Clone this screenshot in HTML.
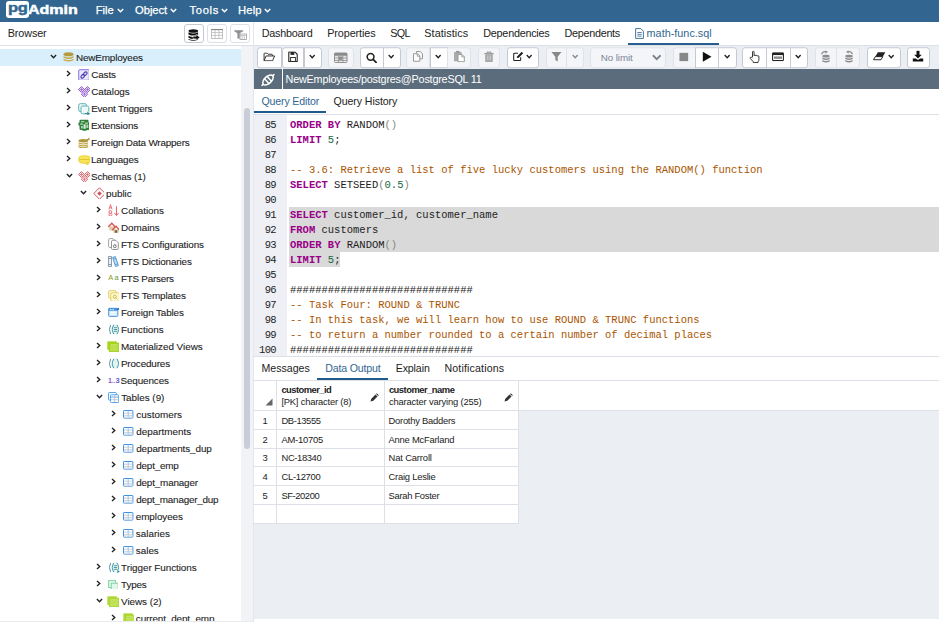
<!DOCTYPE html>
<html><head><meta charset="utf-8"><title>pgAdmin 4</title>
<style>
*{box-sizing:border-box}
html,body{margin:0;padding:0}
body{width:939px;height:622px;overflow:hidden;position:relative;background:#fff;font-family:"Liberation Sans",sans-serif;color:#222;font-size:10px}
.abs{position:absolute}
#hdr{position:absolute;left:0;top:0;width:939px;height:22px;background:#326690}
.menu{position:absolute;top:-.5px;height:20px;line-height:20px;color:#fff;font-size:11.200px;white-space:nowrap;-webkit-text-stroke:.25px #fff}
.menu svg{margin-left:3px;vertical-align:1px}
#side{position:absolute;left:0;top:22px;width:254px;height:600px;background:#fff}
.ptitle{position:absolute;left:7.700px;top:22px;height:23px;line-height:23px;font-size:10.800px;letter-spacing:-.1px}
.sb{position:absolute;top:24px;height:19px;width:19.500px;border:1px solid #dde0e6;border-radius:3px;background:#fff;display:flex;align-items:center;justify-content:center}
.hl{position:absolute;height:1px;background:#dde0e6}
.vl{position:absolute;width:1px;background:#dde0e6}
.tr{position:absolute;left:0;width:241px;height:17px}
.tr.sel{background:#d9effc}
.tr span{position:absolute}
.ar{line-height:0}
.ti{top:2.500px;line-height:0}
.tt{top:0;height:17px;line-height:17px;font-size:9.900px;white-space:nowrap;color:#1c1c1c;-webkit-text-stroke:.1px #1c1c1c}
.tab{position:absolute;top:22px;height:23px;line-height:22px;font-size:10.800px;white-space:nowrap}
.tb{position:absolute;top:47px;height:20.500px;transform:translateY(.25px);border:1px solid #c4cad3;background:#fff;display:flex;align-items:center;justify-content:center;line-height:0;padding-bottom:1.600px}
.tb.dis{border-color:#dfe3e9;background:#f4f5f8}
#conn{position:absolute;left:254px;top:69px;width:685px;height:20px;background:#5b6d7c}
.st{position:absolute;height:22px;line-height:22px;font-size:10.600px;white-space:nowrap}
#gut{position:absolute;left:254px;top:115px;width:33px;height:240.700px;background:#eef0f5}
.ln{position:absolute;left:250px;width:26px;letter-spacing:-.65px;height:15px;line-height:15px;text-align:right;font-family:"Liberation Mono",monospace;font-size:10.500px;color:#222}
.cl{position:absolute;left:290px;height:15px;line-height:15px;font-family:"Liberation Mono",monospace;font-size:10.500px;white-space:pre;color:#222}
.k{color:#908;font-weight:bold}
.c{color:#a50}
.n{color:#164}
.b{color:#887}
.selbg{position:absolute;background:#d9d9d9}
.gr{position:absolute;left:254px;width:264px}
.gr span{position:absolute;top:0;font-size:9.400px;white-space:nowrap}
.g0{left:0;width:22px;text-align:center}
.g1{left:27.500px}
.g2{left:134.500px}
.gh{position:absolute;font-size:9.400px;white-space:nowrap;line-height:12px}
</style></head>
<body>
<div id="hdr"></div>
<div class="abs" style="left:6px;top:1px;width:22.500px;height:16.700px;background:#fff;border-radius:3px;overflow:hidden"><div style="position:absolute;left:2.300px;top:0.400px;line-height:14px;font-size:12.500px;font-weight:bold;color:#326690;-webkit-text-stroke:.4px #326690;transform:scaleX(1.32);transform-origin:0 0;letter-spacing:-.2px">pg</div></div>
<div class="abs" style="left:28.100px;top:1.500px;height:16px;line-height:16px;font-size:12px;font-weight:bold;color:#fff;-webkit-text-stroke:.45px #fff;transform:scaleX(1.335);transform-origin:0 0;white-space:nowrap">Admin</div>
<div class="menu" style="left:95.7px;letter-spacing:-0.008px">File</div><div class="abs" style="left:116.5px;top:7.800px;line-height:0"><svg width="7" height="5" viewBox="0 0 7 5"><path d="M.8 .9l2.700 2.800 2.700-2.800" fill="none" stroke="#fff" stroke-width="1.500"/></svg></div>
<div class="menu" style="left:135.1px;letter-spacing:-0.057px">Object</div><div class="abs" style="left:170px;top:7.800px;line-height:0"><svg width="7" height="5" viewBox="0 0 7 5"><path d="M.8 .9l2.700 2.800 2.700-2.800" fill="none" stroke="#fff" stroke-width="1.500"/></svg></div>
<div class="menu" style="left:189.6px;letter-spacing:0.635px">Tools</div><div class="abs" style="left:220.5px;top:7.800px;line-height:0"><svg width="7" height="5" viewBox="0 0 7 5"><path d="M.8 .9l2.700 2.800 2.700-2.800" fill="none" stroke="#fff" stroke-width="1.500"/></svg></div>
<div class="menu" style="left:238.1px;letter-spacing:0.121px">Help</div><div class="abs" style="left:263.5px;top:7.800px;line-height:0"><svg width="7" height="5" viewBox="0 0 7 5"><path d="M.8 .9l2.700 2.800 2.700-2.800" fill="none" stroke="#fff" stroke-width="1.500"/></svg></div>

<div id="side"></div>
<div class="ptitle">Browser</div>
<div class="sb" style="left:184.300px;border-color:#c5cad2;padding-top:2px"><svg width="12" height="12" viewBox="0 0 12 12"><ellipse cx="5.300" cy="2" rx="4.800" ry="1.800" fill="#111"/><path d="M.5 3.300q4.800 2.400 9.600 0v2.100q-4.800 2.400-9.600 0zM.5 6.700q4.800 2.400 9.600 0v2.100q-4.800 2.400-9.600 0zM.5 10q4.800 2.200 9.600 0v.7q-4.800 2.200-9.600 0z" fill="#111"/><path d="M5 7.200h3.200V5.300l3.600 3.100-3.600 3.100V9.700H5z" fill="#111" stroke="#fff" stroke-width=".5"/></svg></div>
<div class="sb" style="left:207.200px"><svg width="12" height="10" viewBox="0 0 12 10"><rect x=".4" y=".6" width="11.200" height="8.800" fill="#fff" stroke="#b3b3b3" stroke-width=".8"/><path d="M.4 3.500h11.200M.4 6.400h11.200M4.100 .6v8.800M7.900 .6v8.800" stroke="#b3b3b3" stroke-width=".7"/><path d="M.2 .6h11.600" stroke="#7d7d7d" stroke-width="1"/></svg></div>
<div class="sb" style="left:230.100px;padding-top:2px;padding-left:1px"><svg width="13" height="10" viewBox="0 0 13 10"><path d="M.3 .3h8.800v1L5.700 3.300V8.600H3.400V3.300L.3 1.300z" fill="#8f8f8f"/><rect x="6" y="4" width="6.400" height="5.400" fill="#fff" stroke="#9c9c9c" stroke-width=".8"/><path d="M6 5.600h6.400M8.100 5.600v3.800M10.300 5.600v3.800" stroke="#b0b0b0" stroke-width=".7"/></svg></div>
<div class="hl" style="left:0;top:45px;width:254px"></div>
<div class="tr sel" style="top:49px"><span class="ar" style="left:50.0px;top:5.100px"><svg width="7" height="5" viewBox="0 0 7 5"><path d="M.9 1l2.600 2.800L6.100 1" fill="none" stroke="#222" stroke-width="1.350"/></svg></span><span class="ti" style="left:63.0px;top:3.4px"><svg width="11" height="10" viewBox="0 0 0 0 11 10"><ellipse cx="5.500" cy="2.300" rx="5" ry="2" fill="#b59a3c"/><path d="M.5 4.100q5 2.600 10 0v1.700q-5 2.600-10 0zM.5 6.700q5 2.600 10 0v1.500q-5 2.600-10 0z" fill="#c8ad50"/></svg></span><span class="tt" style="left:75.9px;letter-spacing:-0.134px">NewEmployees</span></div>
<div class="tr" style="top:66px"><span class="ar" style="left:65.9px;top:4.400px"><svg width="5" height="7" viewBox="0 0 5 7"><path d="M1 .9l2.800 2.600L1 6.100" fill="none" stroke="#222" stroke-width="1.350"/></svg></span><span class="ti" style="left:78.2px;top:3px"><svg width="11.2" height="11" viewBox="0 0 0 0 12 12"><rect x=".6" y=".6" width="10.800" height="10.800" rx="1.300" fill="#ddd7f8" stroke="#8b78dc" stroke-width=".9"/><rect x="2" y="2" width="8" height="8" rx=".8" fill="#ebe7fb"/><ellipse cx="4.700" cy="7.300" rx="2.100" ry="1.400" transform="rotate(-45 4.700 7.300)" fill="none" stroke="#4535ad" stroke-width="1.100"/><ellipse cx="7.300" cy="4.700" rx="2.100" ry="1.400" transform="rotate(-45 7.300 4.700)" fill="none" stroke="#4535ad" stroke-width="1.100"/></svg></span><span class="tt" style="left:91.2px;letter-spacing:-0.11px">Casts</span></div>
<div class="tr" style="top:83px"><span class="ar" style="left:65.9px;top:4.400px"><svg width="5" height="7" viewBox="0 0 5 7"><path d="M1 .9l2.800 2.600L1 6.100" fill="none" stroke="#222" stroke-width="1.350"/></svg></span><span class="ti" style="left:77.6px;top:2.5px"><svg width="12.2" height="11.3" viewBox="0 0 0 0 13 12"><path d="M3.500 0.500L6.500 3.500L3.500 6.500L.5 3.500z" fill="#e6d6f6" stroke="#8f5ccc" stroke-width=".9"/><path d="M9.500 0.500L12.500 3.500L9.500 6.500L6.500 3.500z" fill="#e6d6f6" stroke="#8f5ccc" stroke-width=".9"/><path d="M6.500 5L9.700 8.200L6.500 11.500L3.300 8.200z" fill="#e6d6f6" stroke="#8f5ccc" stroke-width=".9"/><path d="M3.500 1.800v3.400M1.800 3.500h3.400M9.500 1.800v3.400M7.800 3.500h3.400M6.500 6.500v3.400M4.800 8.200h3.400" stroke="#8f5ccc" stroke-width=".7"/></svg></span><span class="tt" style="left:91.2px;letter-spacing:-0.061px">Catalogs</span></div>
<div class="tr" style="top:100px"><span class="ar" style="left:65.9px;top:4.400px"><svg width="5" height="7" viewBox="0 0 5 7"><path d="M1 .9l2.800 2.600L1 6.100" fill="none" stroke="#222" stroke-width="1.350"/></svg></span><span class="ti" style="left:78.2px;top:2.8px"><svg width="12" height="12" viewBox="0 0 0 0 12.500 12.500"><rect x=".7" y=".7" width="7.800" height="7.800" rx="1.600" fill="#eef9f9" stroke="#5bb0b8" stroke-width="1"/><rect x="3" y="3" width="7.800" height="7.800" rx="1.600" fill="#eef9f9" stroke="#5bb0b8" stroke-width="1"/><rect x="8.300" y="8.600" width="4.200" height="3.900" fill="#fff"/><path d="M7 10.600h2.500" stroke="#2a8d98" stroke-width="1.100"/><path d="M9.200 8.500l3.100 2.100-3.100 2.100z" fill="#2a8d98"/></svg></span><span class="tt" style="left:91.2px;letter-spacing:-0.177px">Event Triggers</span></div>
<div class="tr" style="top:117px"><span class="ar" style="left:65.9px;top:4.400px"><svg width="5" height="7" viewBox="0 0 5 7"><path d="M1 .9l2.800 2.600L1 6.100" fill="none" stroke="#222" stroke-width="1.350"/></svg></span><span class="ti" style="left:77.9px;top:2.2px"><svg width="11.3" height="12" viewBox="0 0 0 0 12 12.500"><path d="M1.500 1.800Q1.500 .8 2.500 .8H9.500Q10.500 .8 10.500 1.800V3.200Q11.500 3.200 11.500 4.200V9.500Q11.500 11 10 11H8.500V11.800H4.500V11H3Q1.500 11 1.500 9.500V6.500H.5V3.500H1.500z" fill="#2f7d3c"/><rect x="3" y="2" width="3.300" height="1.300" fill="#a8d8ae"/><rect x="7" y="3.500" width="3" height="1.300" fill="#a8d8ae"/><rect x="2.300" y="4.300" width="2.500" height="1.600" fill="#a8d8ae"/><rect x="5.500" y="5.300" width="2.200" height="4.500" fill="#d6eed9"/><rect x="8.300" y="5.500" width="2" height="3.500" fill="#a8d8ae"/><rect x="3" y="7" width="1.800" height="2.500" fill="#a8d8ae"/></svg></span><span class="tt" style="left:90.9px;letter-spacing:-0.111px">Extensions</span></div>
<div class="tr" style="top:134px"><span class="ar" style="left:65.9px;top:4.400px"><svg width="5" height="7" viewBox="0 0 5 7"><path d="M1 .9l2.800 2.600L1 6.100" fill="none" stroke="#222" stroke-width="1.350"/></svg></span><span class="ti" style="left:78.2px;top:2.6px"><svg width="11.5" height="11.5" viewBox="0 0 0 0 12 12"><ellipse cx="5.300" cy="3.800" rx="4.800" ry="1.700" fill="#ad963a"/><path d="M.5 5.300q4.800 2.200 9.600 0v1.200q-4.800 2.200-9.600 0zM.5 7.200q4.800 2.200 9.600 0v1.200q-4.800 2.200-9.600 0zM.5 9.100q4.800 2.200 9.600 0v1.200q-4.800 2.200-9.600 0z" fill="#bfa748"/><path d="M8 3L11.500.4V3.300z" fill="#ad963a"/></svg></span><span class="tt" style="left:91.1px;letter-spacing:-0.193px">Foreign Data Wrappers</span></div>
<div class="tr" style="top:151px"><span class="ar" style="left:65.9px;top:4.400px"><svg width="5" height="7" viewBox="0 0 5 7"><path d="M1 .9l2.800 2.600L1 6.100" fill="none" stroke="#222" stroke-width="1.350"/></svg></span><span class="ti" style="left:77.7px;top:3.6px"><svg width="12.2" height="10.5" viewBox="0 0 0 0 13 11"><rect x=".6" y=".8" width="11.800" height="7.400" rx="3.600" fill="#f8e458" stroke="#ecd23a" stroke-width=".9"/><path d="M7.800 8l2 2.600.6-2.800z" fill="#f8e458" stroke="#e6c93a" stroke-width=".8"/><path d="M1.500 4.500h10" stroke="#e3c62f" stroke-width="1"/></svg></span><span class="tt" style="left:90.9px;letter-spacing:-0.131px">Languages</span></div>
<div class="tr" style="top:168px"><span class="ar" style="left:65.7px;top:5.100px"><svg width="7" height="5" viewBox="0 0 7 5"><path d="M.9 1l2.600 2.800L6.100 1" fill="none" stroke="#222" stroke-width="1.350"/></svg></span><span class="ti" style="left:77.6px;top:2.5px"><svg width="12.2" height="11.3" viewBox="0 0 0 0 13 12"><path d="M3.500 0.500L6.500 3.500L3.500 6.500L.5 3.500z" fill="#fbe6e8" stroke="#d6636c" stroke-width=".9"/><path d="M9.500 0.500L12.500 3.500L9.500 6.500L6.500 3.500z" fill="#fbe6e8" stroke="#d6636c" stroke-width=".9"/><path d="M6.500 5L9.700 8.200L6.500 11.500L3.300 8.200z" fill="#fbe6e8" stroke="#d6636c" stroke-width=".9"/><path d="M3.500 1.800v3.400M1.800 3.500h3.400M9.500 1.800v3.400M7.800 3.500h3.400M6.500 6.500v3.400M4.800 8.200h3.400" stroke="#d6636c" stroke-width=".7"/></svg></span><span class="tt" style="left:90.9px;letter-spacing:-0.099px">Schemas (1)</span></div>
<div class="tr" style="top:185px"><span class="ar" style="left:80.2px;top:5.100px"><svg width="7" height="5" viewBox="0 0 7 5"><path d="M.9 1l2.600 2.800L6.100 1" fill="none" stroke="#222" stroke-width="1.350"/></svg></span><span class="ti" style="left:93.1px;top:2.3px"><svg width="11.4" height="12" viewBox="0 0 0 0 13 13"><path d="M6.500.8L12.200 6.500L6.500 12.200L.8 6.500z" fill="#fff" stroke="#d0525c" stroke-width="1"/><path d="M6.500 4.200L8.800 6.500L6.500 8.800L4.200 6.500z" fill="#d0525c"/></svg></span><span class="tt" style="left:106.1px;letter-spacing:-0.052px">public</span></div>
<div class="tr" style="top:202px"><span class="ar" style="left:95.9px;top:4.400px"><svg width="5" height="7" viewBox="0 0 5 7"><path d="M1 .9l2.800 2.600L1 6.100" fill="none" stroke="#222" stroke-width="1.350"/></svg></span><span class="ti" style="left:107.7px;top:1.7px"><svg width="11.5" height="12" viewBox="0 0 0 0 12 12.500"><path d="M1 5.300L2.500.5L4 5.300M1.500 3.800h2" fill="none" stroke="#ea6670" stroke-width=".9"/><path d="M1.200 6.700v5.200h1.600q1.200 0 1.200-1.300T2.800 9.300H1.200M2.800 9.300q1 0 1-1.300T2.800 6.700H1.200" fill="none" stroke="#ea6670" stroke-width=".9"/><path d="M8.500 2.200v9M6.300 8.900l2.200 2.600 2.200-2.600" fill="none" stroke="#ea6670" stroke-width="1"/></svg></span><span class="tt" style="left:121.1px;letter-spacing:-0.068px">Collations</span></div>
<div class="tr" style="top:219px"><span class="ar" style="left:95.9px;top:4.400px"><svg width="5" height="7" viewBox="0 0 5 7"><path d="M1 .9l2.800 2.600L1 6.100" fill="none" stroke="#222" stroke-width="1.350"/></svg></span><span class="ti" style="left:107.8px;top:3.4px"><svg width="11.5" height="10.5" viewBox="0 0 0 0 12 11"><path d="M1.400 4.500h4.800v4H1.400z" fill="#d9c9a6"/><path d="M.3 5L3.800 1.300L7.300 5" fill="none" stroke="#d9534f" stroke-width="1.300"/><path d="M5.500 7.500h5v3.300h-5z" fill="#cdb98e"/><rect x="7.200" y="8.300" width="1.700" height="2.500" fill="#6b5533"/><path d="M4.300 8.200L8 4.300L11.700 8.200" fill="none" stroke="#d9534f" stroke-width="1.300"/></svg></span><span class="tt" style="left:120.9px;letter-spacing:-0.024px">Domains</span></div>
<div class="tr" style="top:236px"><span class="ar" style="left:95.9px;top:4.400px"><svg width="5" height="7" viewBox="0 0 5 7"><path d="M1 .9l2.800 2.600L1 6.100" fill="none" stroke="#222" stroke-width="1.350"/></svg></span><span class="ti" style="left:108.3px;top:2.2px"><svg width="11" height="12" viewBox="0 0 0 0 11 12"><path d="M.6 1.800Q.6.600 1.800.600H5L7 2.600V9.500H1.800Q.6 9.500.6 8.300z" fill="#fff" stroke="#999" stroke-width=".9"/><path d="M3.500 3.500Q3.500 2.300 4.700 2.300H7.800L10.300 4.800V10.300Q10.300 11.500 9.100 11.500H4.700Q3.500 11.500 3.500 10.300z" fill="#fff" stroke="#888" stroke-width=".9"/><circle cx="6.800" cy="8.300" r="1.400" fill="none" stroke="#666" stroke-width=".9"/><path d="M6.800 6.300v.8M8.200 6.900l-.5.500" stroke="#666" stroke-width=".7"/></svg></span><span class="tt" style="left:120.9px;letter-spacing:-0.115px">FTS Configurations</span></div>
<div class="tr" style="top:253px"><span class="ar" style="left:95.9px;top:4.400px"><svg width="5" height="7" viewBox="0 0 5 7"><path d="M1 .9l2.800 2.600L1 6.100" fill="none" stroke="#222" stroke-width="1.350"/></svg></span><span class="ti" style="left:107.9px;top:3.1px"><svg width="11" height="11" viewBox="0 0 0 0 11 11"><rect x=".6" y=".6" width="2.900" height="9.800" fill="#eef2f5" stroke="#7f94a5" stroke-width=".9"/><path d="M.6 2.500h2.900M.6 8.500h2.900" stroke="#7f94a5" stroke-width=".9"/><path d="M4.600 1.400l2.800-.8 3 9-2.800.9z" fill="#bfdcf2" stroke="#4b94cf" stroke-width=".9"/><path d="M5.200 3.200l2.800-.9M7.200 8.700l2.800-.9" stroke="#4b94cf" stroke-width=".8"/></svg></span><span class="tt" style="left:120.9px;letter-spacing:-0.137px">FTS Dictionaries</span></div>
<div class="tr" style="top:270px"><span class="ar" style="left:95.9px;top:4.400px"><svg width="5" height="7" viewBox="0 0 5 7"><path d="M1 .9l2.800 2.600L1 6.100" fill="none" stroke="#222" stroke-width="1.350"/></svg></span><span class="ti" style="left:107.8px;top:3.3px"><svg width="12" height="9" viewBox="0 0 0 0 12 9"><text x=".3" y="7.300" font-family="Liberation Sans, sans-serif" font-size="7.400" fill="#8a9a1e">A</text><text x="6.600" y="7.300" font-family="Liberation Sans, sans-serif" font-size="7.400" fill="#5c9a30">a</text></svg></span><span class="tt" style="left:120.9px;letter-spacing:-0.238px">FTS Parsers</span></div>
<div class="tr" style="top:287px"><span class="ar" style="left:95.9px;top:4.400px"><svg width="5" height="7" viewBox="0 0 5 7"><path d="M1 .9l2.800 2.600L1 6.100" fill="none" stroke="#222" stroke-width="1.350"/></svg></span><span class="ti" style="left:107.8px;top:3.3px"><svg width="11.3" height="11" viewBox="0 0 0 0 12 12"><rect x=".6" y=".6" width="7.600" height="7.600" rx="1.200" fill="#fdf8d2" stroke="#e0cd5e" stroke-width=".9"/><rect x="2.800" y="2.800" width="8.600" height="8.600" rx="1.200" fill="#fdf8d2" stroke="#e0cd5e" stroke-width=".9"/><circle cx="6.700" cy="6.700" r="1.500" fill="none" stroke="#c9ad2e" stroke-width=".8"/><path d="M7.800 7.800l1.400 1.400" stroke="#c9ad2e" stroke-width=".8"/></svg></span><span class="tt" style="left:120.9px;letter-spacing:-0.103px">FTS Templates</span></div>
<div class="tr" style="top:304px"><span class="ar" style="left:95.9px;top:4.400px"><svg width="5" height="7" viewBox="0 0 5 7"><path d="M1 .9l2.800 2.600L1 6.100" fill="none" stroke="#222" stroke-width="1.350"/></svg></span><span class="ti" style="left:107.8px;top:3.4px"><svg width="11.5" height="10" viewBox="0 0 0 0 11.500 10"><rect x=".6" y="1.300" width="9.300" height="8.100" rx="1" fill="#d3e8f9" stroke="#3f8fdc" stroke-width=".9"/><rect x=".6" y="1.300" width="9.300" height="2.400" fill="#3f8fdc"/><path d="M2 2.500h1.500M4.500 2.500h1.500" stroke="#fff" stroke-width=".8"/><path d="M2 5.300h6.500M2 7.300h6.500" stroke="#fff" stroke-width="1.100"/><path d="M8.800 2.800L11.300.2V2.800z" fill="#1f5f9f"/></svg></span><span class="tt" style="left:120.9px;letter-spacing:-0.121px">Foreign Tables</span></div>
<div class="tr" style="top:321px"><span class="ar" style="left:95.9px;top:4.400px"><svg width="5" height="7" viewBox="0 0 5 7"><path d="M1 .9l2.800 2.600L1 6.100" fill="none" stroke="#222" stroke-width="1.350"/></svg></span><span class="ti" style="left:107.5px;top:2.9px"><svg width="12" height="11.5" viewBox="0 0 0 0 12 11.500"><path d="M2.600 1Q.3 5.500 2.600 10" fill="none" stroke="#4a9aa6" stroke-width="1"/><path d="M5.300.8Q3.700 1 3.900 3.300Q4 5 2.900 5.500Q4 6 3.900 7.700Q3.700 10 5.300 10.200H8.700Q10.300 10 10.100 7.700Q10 6 11.100 5.500Q10 5 10.100 3.300Q10.300 1 8.700.8z" fill="#e2f5f5" stroke="none"/><path d="M5.900.8Q2.600 5.500 5.900 10.200" fill="none" stroke="#4a9aa6" stroke-width="1"/><path d="M8.900.8Q12.200 5.500 8.900 10.200" fill="none" stroke="#4a9aa6" stroke-width="1"/><path d="M5.800 3.700h3.300M5.800 5.500h3.300M5.800 7.300h3.300" stroke="#2f7f8b" stroke-width=".8"/></svg></span><span class="tt" style="left:120.9px;letter-spacing:0.008px">Functions</span></div>
<div class="tr" style="top:338px"><span class="ar" style="left:95.9px;top:4.400px"><svg width="5" height="7" viewBox="0 0 5 7"><path d="M1 .9l2.800 2.600L1 6.100" fill="none" stroke="#222" stroke-width="1.350"/></svg></span><span class="ti" style="left:107.4px;top:3.0px"><svg width="11.5" height="10.8" viewBox="0 0 0 0 12 11"><rect x=".3" y=".3" width="9.500" height="8.600" fill="#a9d622"/><rect x="2.200" y="2" width="9.500" height="8.700" fill="#a9d622" stroke="#9ccc1a" stroke-width=".6"/><rect x="4" y="3.800" width="6" height="5.200" fill="none" stroke="#d3ec85" stroke-width=".8"/><circle cx="7" cy="6.400" r="1.400" fill="none" stroke="#d3ec85" stroke-width=".8"/></svg></span><span class="tt" style="left:120.9px;letter-spacing:-0.02px">Materialized Views</span></div>
<div class="tr" style="top:355px"><span class="ar" style="left:95.9px;top:4.400px"><svg width="5" height="7" viewBox="0 0 5 7"><path d="M1 .9l2.800 2.600L1 6.100" fill="none" stroke="#222" stroke-width="1.350"/></svg></span><span class="ti" style="left:107.5px;top:2.9px"><svg width="12" height="11.5" viewBox="0 0 0 0 12 11.500"><path d="M2.600 1Q.3 5.500 2.600 10" fill="none" stroke="#4a9aa6" stroke-width="1"/><path d="M5.300.8Q3.700 1 3.900 3.300Q4 5 2.900 5.500Q4 6 3.900 7.700Q3.700 10 5.300 10.200H8.700Q10.300 10 10.100 7.700Q10 6 11.100 5.500Q10 5 10.100 3.300Q10.300 1 8.700.8z" fill="#e2f5f5" stroke="none"/><path d="M5.900.8Q2.600 5.500 5.900 10.200" fill="none" stroke="#4a9aa6" stroke-width="1"/><path d="M8.900.8Q12.200 5.500 8.900 10.200" fill="none" stroke="#4a9aa6" stroke-width="1"/></svg></span><span class="tt" style="left:120.9px;letter-spacing:-0.14px">Procedures</span></div>
<div class="tr" style="top:372px"><span class="ar" style="left:95.9px;top:4.400px"><svg width="5" height="7" viewBox="0 0 5 7"><path d="M1 .9l2.800 2.600L1 6.100" fill="none" stroke="#222" stroke-width="1.350"/></svg></span><span class="ti" style="left:107.6px;top:3.8px"><svg width="12" height="8" viewBox="0 0 0 0 12 8"><text x="0" y="6.800" font-family="Liberation Sans, sans-serif" font-size="7.200" font-weight="bold" fill="#9259cf" textLength="4" lengthAdjust="spacingAndGlyphs">1</text><text x="4.100" y="6.800" font-family="Liberation Sans, sans-serif" font-size="7.200" font-weight="bold" fill="#8a5fd2" textLength="3.300" lengthAdjust="spacingAndGlyphs">..</text><text x="7.500" y="6.800" font-family="Liberation Sans, sans-serif" font-size="7.200" font-weight="bold" fill="#5d5fd6" textLength="4.200" lengthAdjust="spacingAndGlyphs">3</text></svg></span><span class="tt" style="left:120.4px;letter-spacing:-0.102px">Sequences</span></div>
<div class="tr" style="top:389px"><span class="ar" style="left:95.7px;top:5.100px"><svg width="7" height="5" viewBox="0 0 7 5"><path d="M.9 1l2.600 2.800L6.100 1" fill="none" stroke="#222" stroke-width="1.350"/></svg></span><span class="ti" style="left:107.9px;top:3.0px"><svg width="11.2" height="11" viewBox="0 0 0 0 11.200 11"><rect x=".5" y=".5" width="7.800" height="7.600" rx=".8" fill="#f4f9fe" stroke="#4a9be8" stroke-width=".9"/><rect x="2.500" y="2.800" width="8.200" height="7.700" rx=".8" fill="#fff" stroke="#4a9be8" stroke-width=".9"/><path d="M2.500 5.100h8.200" stroke="#4a9be8" stroke-width=".8"/><path d="M2.900 7.700h7.400M6.600 3.200v7" stroke="#b4bec8" stroke-width=".8"/></svg></span><span class="tt" style="left:121.2px;letter-spacing:-0.016px">Tables (9)</span></div>
<div class="tr" style="top:406px"><span class="ar" style="left:110.9px;top:4.400px"><svg width="5" height="7" viewBox="0 0 5 7"><path d="M1 .9l2.800 2.600L1 6.100" fill="none" stroke="#222" stroke-width="1.350"/></svg></span><span class="ti" style="left:123.1px;top:4.0px"><svg width="11.3" height="8.7" viewBox="0 0 0 0 10.400 8.600"><rect x=".5" y=".5" width="9.400" height="7.600" rx=".6" fill="#fff" stroke="#3f93e6" stroke-width="1"/><path d="M1 3.200h8.400M1 5.600h8.400" stroke="#c0c8d0" stroke-width=".8"/><path d="M5.200 .9v6.800" stroke="#8fb8e0" stroke-width=".8"/><rect x="1" y="5.900" width="3.800" height="1.700" fill="#e6e9ec"/><rect x="5.600" y="5.900" width="3.800" height="1.700" fill="#e6e9ec"/></svg></span><span class="tt" style="left:136.2px;letter-spacing:0.028px">customers</span></div>
<div class="tr" style="top:423px"><span class="ar" style="left:110.9px;top:4.400px"><svg width="5" height="7" viewBox="0 0 5 7"><path d="M1 .9l2.800 2.600L1 6.100" fill="none" stroke="#222" stroke-width="1.350"/></svg></span><span class="ti" style="left:123.1px;top:4.0px"><svg width="11.3" height="8.7" viewBox="0 0 0 0 10.400 8.600"><rect x=".5" y=".5" width="9.400" height="7.600" rx=".6" fill="#fff" stroke="#3f93e6" stroke-width="1"/><path d="M1 3.200h8.400M1 5.600h8.400" stroke="#c0c8d0" stroke-width=".8"/><path d="M5.200 .9v6.800" stroke="#8fb8e0" stroke-width=".8"/><rect x="1" y="5.900" width="3.800" height="1.700" fill="#e6e9ec"/><rect x="5.600" y="5.900" width="3.800" height="1.700" fill="#e6e9ec"/></svg></span><span class="tt" style="left:136.2px;letter-spacing:-0.001px">departments</span></div>
<div class="tr" style="top:440px"><span class="ar" style="left:110.9px;top:4.400px"><svg width="5" height="7" viewBox="0 0 5 7"><path d="M1 .9l2.800 2.600L1 6.100" fill="none" stroke="#222" stroke-width="1.350"/></svg></span><span class="ti" style="left:123.1px;top:4.0px"><svg width="11.3" height="8.7" viewBox="0 0 0 0 10.400 8.600"><rect x=".5" y=".5" width="9.400" height="7.600" rx=".6" fill="#fff" stroke="#3f93e6" stroke-width="1"/><path d="M1 3.200h8.400M1 5.600h8.400" stroke="#c0c8d0" stroke-width=".8"/><path d="M5.200 .9v6.800" stroke="#8fb8e0" stroke-width=".8"/><rect x="1" y="5.900" width="3.800" height="1.700" fill="#e6e9ec"/><rect x="5.600" y="5.900" width="3.800" height="1.700" fill="#e6e9ec"/></svg></span><span class="tt" style="left:136.2px;letter-spacing:-0.091px">departments_dup</span></div>
<div class="tr" style="top:457px"><span class="ar" style="left:110.9px;top:4.400px"><svg width="5" height="7" viewBox="0 0 5 7"><path d="M1 .9l2.800 2.600L1 6.100" fill="none" stroke="#222" stroke-width="1.350"/></svg></span><span class="ti" style="left:123.1px;top:4.0px"><svg width="11.3" height="8.7" viewBox="0 0 0 0 10.400 8.600"><rect x=".5" y=".5" width="9.400" height="7.600" rx=".6" fill="#fff" stroke="#3f93e6" stroke-width="1"/><path d="M1 3.200h8.400M1 5.600h8.400" stroke="#c0c8d0" stroke-width=".8"/><path d="M5.200 .9v6.800" stroke="#8fb8e0" stroke-width=".8"/><rect x="1" y="5.900" width="3.800" height="1.700" fill="#e6e9ec"/><rect x="5.600" y="5.900" width="3.800" height="1.700" fill="#e6e9ec"/></svg></span><span class="tt" style="left:136.2px;letter-spacing:-0.178px">dept_emp</span></div>
<div class="tr" style="top:474px"><span class="ar" style="left:110.9px;top:4.400px"><svg width="5" height="7" viewBox="0 0 5 7"><path d="M1 .9l2.800 2.600L1 6.100" fill="none" stroke="#222" stroke-width="1.350"/></svg></span><span class="ti" style="left:123.1px;top:4.0px"><svg width="11.3" height="8.7" viewBox="0 0 0 0 10.400 8.600"><rect x=".5" y=".5" width="9.400" height="7.600" rx=".6" fill="#fff" stroke="#3f93e6" stroke-width="1"/><path d="M1 3.200h8.400M1 5.600h8.400" stroke="#c0c8d0" stroke-width=".8"/><path d="M5.200 .9v6.800" stroke="#8fb8e0" stroke-width=".8"/><rect x="1" y="5.900" width="3.800" height="1.700" fill="#e6e9ec"/><rect x="5.600" y="5.900" width="3.800" height="1.700" fill="#e6e9ec"/></svg></span><span class="tt" style="left:136.2px;letter-spacing:-0.166px">dept_manager</span></div>
<div class="tr" style="top:491px"><span class="ar" style="left:110.9px;top:4.400px"><svg width="5" height="7" viewBox="0 0 5 7"><path d="M1 .9l2.800 2.600L1 6.100" fill="none" stroke="#222" stroke-width="1.350"/></svg></span><span class="ti" style="left:123.1px;top:4.0px"><svg width="11.3" height="8.7" viewBox="0 0 0 0 10.400 8.600"><rect x=".5" y=".5" width="9.400" height="7.600" rx=".6" fill="#fff" stroke="#3f93e6" stroke-width="1"/><path d="M1 3.200h8.400M1 5.600h8.400" stroke="#c0c8d0" stroke-width=".8"/><path d="M5.200 .9v6.800" stroke="#8fb8e0" stroke-width=".8"/><rect x="1" y="5.900" width="3.800" height="1.700" fill="#e6e9ec"/><rect x="5.600" y="5.900" width="3.800" height="1.700" fill="#e6e9ec"/></svg></span><span class="tt" style="left:136.2px;letter-spacing:-0.216px">dept_manager_dup</span></div>
<div class="tr" style="top:508px"><span class="ar" style="left:110.9px;top:4.400px"><svg width="5" height="7" viewBox="0 0 5 7"><path d="M1 .9l2.800 2.600L1 6.100" fill="none" stroke="#222" stroke-width="1.350"/></svg></span><span class="ti" style="left:123.1px;top:4.0px"><svg width="11.3" height="8.7" viewBox="0 0 0 0 10.400 8.600"><rect x=".5" y=".5" width="9.400" height="7.600" rx=".6" fill="#fff" stroke="#3f93e6" stroke-width="1"/><path d="M1 3.200h8.400M1 5.600h8.400" stroke="#c0c8d0" stroke-width=".8"/><path d="M5.200 .9v6.800" stroke="#8fb8e0" stroke-width=".8"/><rect x="1" y="5.900" width="3.800" height="1.700" fill="#e6e9ec"/><rect x="5.600" y="5.900" width="3.800" height="1.700" fill="#e6e9ec"/></svg></span><span class="tt" style="left:135.8px;letter-spacing:-0.074px">employees</span></div>
<div class="tr" style="top:525px"><span class="ar" style="left:110.9px;top:4.400px"><svg width="5" height="7" viewBox="0 0 5 7"><path d="M1 .9l2.800 2.600L1 6.100" fill="none" stroke="#222" stroke-width="1.350"/></svg></span><span class="ti" style="left:123.1px;top:4.0px"><svg width="11.3" height="8.7" viewBox="0 0 0 0 10.400 8.600"><rect x=".5" y=".5" width="9.400" height="7.600" rx=".6" fill="#fff" stroke="#3f93e6" stroke-width="1"/><path d="M1 3.200h8.400M1 5.600h8.400" stroke="#c0c8d0" stroke-width=".8"/><path d="M5.200 .9v6.800" stroke="#8fb8e0" stroke-width=".8"/><rect x="1" y="5.900" width="3.800" height="1.700" fill="#e6e9ec"/><rect x="5.600" y="5.900" width="3.800" height="1.700" fill="#e6e9ec"/></svg></span><span class="tt" style="left:135.8px;letter-spacing:0.034px">salaries</span></div>
<div class="tr" style="top:542px"><span class="ar" style="left:110.9px;top:4.400px"><svg width="5" height="7" viewBox="0 0 5 7"><path d="M1 .9l2.800 2.600L1 6.100" fill="none" stroke="#222" stroke-width="1.350"/></svg></span><span class="ti" style="left:123.1px;top:4.0px"><svg width="11.3" height="8.7" viewBox="0 0 0 0 10.400 8.600"><rect x=".5" y=".5" width="9.400" height="7.600" rx=".6" fill="#fff" stroke="#3f93e6" stroke-width="1"/><path d="M1 3.200h8.400M1 5.600h8.400" stroke="#c0c8d0" stroke-width=".8"/><path d="M5.200 .9v6.800" stroke="#8fb8e0" stroke-width=".8"/><rect x="1" y="5.900" width="3.800" height="1.700" fill="#e6e9ec"/><rect x="5.600" y="5.900" width="3.800" height="1.700" fill="#e6e9ec"/></svg></span><span class="tt" style="left:135.8px;letter-spacing:-0.013px">sales</span></div>
<div class="tr" style="top:559px"><span class="ar" style="left:95.9px;top:4.400px"><svg width="5" height="7" viewBox="0 0 5 7"><path d="M1 .9l2.800 2.600L1 6.100" fill="none" stroke="#222" stroke-width="1.350"/></svg></span><span class="ti" style="left:107.5px;top:2.9px"><svg width="12" height="11.5" viewBox="0 0 0 0 12 11.500"><path d="M2.600 1Q.3 5.500 2.600 10" fill="none" stroke="#4a9aa6" stroke-width="1"/><path d="M5.300.8Q3.700 1 3.900 3.300Q4 5 2.900 5.500Q4 6 3.900 7.700Q3.700 10 5.300 10.200H8.700Q10.300 10 10.100 7.700Q10 6 11.100 5.500Q10 5 10.100 3.300Q10.300 1 8.700.8z" fill="#e2f5f5" stroke="none"/><path d="M5.900.8Q2.600 5.500 5.900 10.200" fill="none" stroke="#4a9aa6" stroke-width="1"/><path d="M8.900.8Q12.200 5.500 8.900 10.200" fill="none" stroke="#4a9aa6" stroke-width="1"/><path d="M5.800 3.700h3.300M5.800 5.500h3.300M5.800 7.300h3.300" stroke="#2f7f8b" stroke-width=".8"/><rect x="8.300" y="8" width="4" height="3.500" fill="#fff"/><path d="M9.300 7.800l2.500 1.700-2.500 1.700z" fill="#2a8d98"/></svg></span><span class="tt" style="left:121.1px;letter-spacing:-0.057px">Trigger Functions</span></div>
<div class="tr" style="top:576px"><span class="ar" style="left:95.9px;top:4.400px"><svg width="5" height="7" viewBox="0 0 5 7"><path d="M1 .9l2.800 2.600L1 6.100" fill="none" stroke="#222" stroke-width="1.350"/></svg></span><span class="ti" style="left:108.4px;top:4.0px"><svg width="9.6" height="9.2" viewBox="0 0 0 0 11 11"><rect x=".6" y=".6" width="7" height="7" fill="#e3f6ea" stroke="#79cfa0" stroke-width=".9"/><rect x="3.200" y="3.200" width="7" height="7" fill="#e3f6ea" stroke="#79cfa0" stroke-width=".9"/></svg></span><span class="tt" style="left:121.1px;letter-spacing:-0.172px">Types</span></div>
<div class="tr" style="top:593px"><span class="ar" style="left:95.7px;top:5.100px"><svg width="7" height="5" viewBox="0 0 7 5"><path d="M.9 1l2.600 2.800L6.100 1" fill="none" stroke="#222" stroke-width="1.350"/></svg></span><span class="ti" style="left:107.4px;top:3.0px"><svg width="11.5" height="10.8" viewBox="0 0 0 0 12 11"><rect x=".3" y=".3" width="9.500" height="8.600" fill="#b1da38"/><rect x="2.200" y="2" width="9.500" height="8.700" fill="#b1da38" stroke="#a4d02a" stroke-width=".6"/><rect x="4" y="3.800" width="6" height="5.200" fill="none" stroke="#d3ec85" stroke-width=".8"/><circle cx="7" cy="6.400" r="1.400" fill="none" stroke="#d3ec85" stroke-width=".8"/></svg></span><span class="tt" style="left:121.1px;letter-spacing:-0.054px">Views (2)</span></div>
<div class="tr" style="top:610px"><span class="ar" style="left:110.9px;top:4.400px"><svg width="5" height="7" viewBox="0 0 5 7"><path d="M1 .9l2.800 2.600L1 6.100" fill="none" stroke="#222" stroke-width="1.350"/></svg></span><span class="ti" style="left:122.9px;top:3.0px"><svg width="11.5" height="10.8" viewBox="0 0 0 0 12 11"><rect x=".3" y=".3" width="9.500" height="8.600" fill="#b1da38"/><rect x="2.200" y="2" width="9.500" height="8.700" fill="#b1da38" stroke="#a4d02a" stroke-width=".6"/><rect x="4" y="3.800" width="6" height="5.200" fill="none" stroke="#d3ec85" stroke-width=".8"/><circle cx="7" cy="6.400" r="1.400" fill="none" stroke="#d3ec85" stroke-width=".8"/></svg></span><span class="tt" style="left:135.8px;letter-spacing:-0.104px">current_dept_emp</span></div>
<div class="abs" style="left:241px;top:46px;width:12.500px;height:576px;background:#f1f3f6"></div>
<div class="abs" style="left:244px;top:108px;width:6px;height:341px;background:#c9cdd7;border-radius:3px"></div>
<div class="vl" style="left:253px;top:22px;height:600px;background:#e3e6ec"></div>

<div class="tab" style="left:261.8px;letter-spacing:-0.248px">Dashboard</div>
<div class="tab" style="left:327.2px;letter-spacing:-0.092px">Properties</div>
<div class="tab" style="left:390.3px;letter-spacing:-0.636px">SQL</div>
<div class="tab" style="left:424.3px;letter-spacing:0.08px">Statistics</div>
<div class="tab" style="left:483.3px;letter-spacing:-0.244px">Dependencies</div>
<div class="tab" style="left:564.4px;letter-spacing:-0.263px">Dependents</div>
<div class="abs" style="left:635px;top:27.500px;line-height:0"><svg width="9" height="11" viewBox="0 0 9 11"><path d="M.6 .6h5.200L8.400 3.200V10.400H.6z" fill="#fff" stroke="#326690" stroke-width=".9"/><path d="M2.300 4.500h4.400M2.300 6.300h4.400M2.300 8.100h4.400" stroke="#326690" stroke-width=".8"/></svg></div>
<div class="tab" style="left:646.6px;letter-spacing:0.022px;color:#326690">math-func.sql</div>
<div class="abs" style="left:628.200px;top:43px;width:90.800px;height:2px;background:#265f8f"></div>
<div class="hl" style="left:254px;top:45px;width:685px"></div>
<div class="abs" style="left:254px;top:45.500px;width:685px;height:23.500px;background:#ebeef3"></div>
<div class="tb" style="left:257.2px;width:24.80000000000001px;border-radius:3px 0px 0px 3px"><svg width="12.500" height="9.500" viewBox="0 0 14 11"><path d="M1 9.500V1.800Q1 1 1.800 1H4.300L5.600 2.300H9.800Q10.600 2.300 10.600 3.100V4.200" fill="none" stroke="#222" stroke-width="1.050"/><path d="M1 9.900L3.300 4.300H13.200L10.800 9.900z" fill="#fff" stroke="#222" stroke-width="1.050" stroke-linejoin="round"/></svg></div><div class="tb" style="left:282.2px;width:22.30000000000001px;border-radius:3px 0px 0px 3px"><svg width="10" height="11" viewBox="0 0 10 11"><path d="M.8 .8h6.200l2.200 2.200v7.200H.8z" fill="#fff" stroke="#222" stroke-width="1.100" stroke-linejoin="round"/><rect x="2.500" y=".8" width="3.800" height="2.800" fill="#222"/><rect x="2.600" y="6.200" width="4.800" height="4" fill="#fff" stroke="#222" stroke-width=".9"/></svg></div><div class="tb" style="left:303.5px;width:18.0px;border-radius:0px 3px 3px 0px"><svg width="6.4" height="4.6" viewBox="0 0 7 5"><path d="M.8 .9l2.700 2.800 2.700-2.800" fill="none" stroke="#222" stroke-width="1.500"/></svg></div><div class="tb dis" style="left:328px;width:25.5px;border-radius:3px 3px 3px 3px"><svg style="margin-top:1.400px" width="13.500" height="11" viewBox="0 0 14 11"><rect x=".5" y=".5" width="13" height="10" rx="1.200" fill="#ededed" stroke="#8a8a8a" stroke-width="1"/><path d="M.5 3.300h13M.5 5.800h13M.5 8.300h13M4.800 3.300v7.200M9.200 3.300v7.200" stroke="#8a8a8a" stroke-width=".8"/><rect x=".5" y=".5" width="13" height="2.400" fill="#8a8a8a"/><rect x="5.200" y="4.300" width="3.600" height="3.300" fill="#8a8a8a"/></svg></div><div class="tb" style="left:360px;width:23.5px;border-radius:3px 0px 0px 3px"><svg style="margin-top:2px" width="11" height="11" viewBox="0 0 12 12"><circle cx="5" cy="5" r="3.700" fill="none" stroke="#222" stroke-width="1.700"/><path d="M7.800 7.800l3.200 3.200" stroke="#222" stroke-width="2" stroke-linecap="round"/></svg></div><div class="tb" style="left:382.5px;width:18.0px;border-radius:0px 3px 3px 0px"><svg width="6.4" height="4.6" viewBox="0 0 7 5"><path d="M.8 .9l2.700 2.800 2.700-2.800" fill="none" stroke="#222" stroke-width="1.500"/></svg></div><div class="tb dis" style="left:406.4px;width:24.100000000000023px;border-radius:3px 0px 0px 3px"><svg width="12" height="12" viewBox="0 0 12 12"><path d="M4.500 3V1.200h3.800L10.500 3.400V8.500H8" fill="none" stroke="#999" stroke-width="1"/><path d="M1.500 3.500h4L7.800 5.800V11H1.500z" fill="#fff" stroke="#999" stroke-width="1"/><path d="M5.300 3.500V6h2.500" fill="none" stroke="#999" stroke-width=".9"/></svg></div><div class="tb" style="left:429.5px;width:18.0px;border-radius:0px 0px 0px 0px"><svg width="6.4" height="4.6" viewBox="0 0 7 5"><path d="M.8 .9l2.700 2.800 2.700-2.800" fill="none" stroke="#222" stroke-width="1.500"/></svg></div><div class="tb dis" style="left:446.5px;width:24.899999999999977px;border-radius:0px 3px 3px 0px"><svg width="12" height="12" viewBox="0 0 12 12"><path d="M1 1.800h7.500V11H1z" fill="#aaa"/><rect x="3" y=".6" width="3.500" height="2" fill="#999"/><path d="M5 4.200h4l2.300 2.300V11.500H5z" fill="#fff" stroke="#999" stroke-width="1"/><path d="M8.800 4.200v2.500h2.500" fill="none" stroke="#999" stroke-width=".9"/></svg></div><div class="tb dis" style="left:478px;width:22.19999999999999px;border-radius:3px 3px 3px 3px"><svg width="10" height="11" viewBox="0 0 10 11"><path d="M.3 2.300h9.400M3.300 2.300V.9h3.400v1.400" fill="none" stroke="#9c9c9c" stroke-width="1.200"/><path d="M1.200 3h7.600V10q0 .7-.7.700H1.900q-.7 0-.7-.7z" fill="#a6a6a6"/><path d="M3.300 4.300v4.800M5 4.300v4.800M6.700 4.300v4.800" stroke="#d9d9d9" stroke-width=".7"/></svg></div><div class="tb" style="left:506.6px;width:32.89999999999998px;border-radius:3px 3px 3px 3px"><span style="display:inline-flex;align-items:center;gap:2px"><svg width="11" height="10" viewBox="0 0 11 10"><path d="M7.700 6V8.500Q7.700 9.300 6.900 9.300H1.500Q.7 9.300.7 8.500V2.800Q.7 2 1.500 2H5" fill="none" stroke="#222" stroke-width="1.050"/><path d="M3.800 6.800l.5-1.900L8.700.5l1.500 1.500L5.800 6.400z" fill="#222"/></svg><svg width="6.4" height="4.6" viewBox="0 0 7 5"><path d="M.8 .9l2.700 2.800 2.700-2.800" fill="none" stroke="#222" stroke-width="1.500"/></svg></span></div><div class="tb dis" style="left:545.7px;width:21.299999999999955px;border-radius:3px 0px 0px 3px"><svg width="11" height="11" viewBox="0 0 11 11"><path d="M.5 .8h10L6.700 5.500V10.300L4.300 8.800V5.500z" fill="#888"/></svg></div><div class="tb dis" style="left:566px;width:18.200000000000045px;border-radius:0px 3px 3px 0px"><svg width="6.4" height="4.6" viewBox="0 0 7 5"><path d="M.8 .9l2.700 2.800 2.700-2.800" fill="none" stroke="#888" stroke-width="1.500"/></svg></div><div class="tb dis" style="left:590.200px;width:76px;border-radius:3px;justify-content:space-between;padding-bottom:0;padding-top:.4px"><span style="margin-left:9.600px;margin-top:.8px;font-size:9.800px;color:#80859a;letter-spacing:-.1px">No limit</span><svg style="margin-right:4.200px" width="9.500" height="6.500" viewBox="0 0 9.500 6.500"><path d="M.9 1l3.850 3.900L8.600 1" fill="none" stroke="#7a8290" stroke-width="1.800"/></svg></div><div class="tb dis" style="left:673px;width:22.5px;border-radius:3px 0px 0px 3px"><svg width="9.600" height="9.600" viewBox="0 0 11 11"><rect x=".5" y=".5" width="10" height="10" rx=".8" fill="#888"/></svg></div><div class="tb" style="left:694.5px;width:24.5px;border-radius:0px 0px 0px 0px"><svg width="10" height="11" viewBox="0 0 10 11"><path d="M.8 .5L9.500 5.500L.8 10.500z" fill="#111"/></svg></div><div class="tb" style="left:718px;width:18.5px;border-radius:0px 3px 3px 0px"><svg width="6.4" height="4.6" viewBox="0 0 7 5"><path d="M.8 .9l2.700 2.800 2.700-2.800" fill="none" stroke="#222" stroke-width="1.500"/></svg></div><div class="tb" style="left:742px;width:24.5px;border-radius:3px 0px 0px 3px"><svg width="11" height="13" viewBox="0 0 11 13"><path d="M3.500 7V1.800Q3.500 1 4.300 1T5.100 1.800V5.500Q5.100 4.800 5.900 4.800T6.700 5.600Q6.700 5.100 7.500 5.100T8.300 5.900Q8.300 5.500 9.100 5.500T9.900 6.300V9.500Q9.900 10.500 9 11.500V12.300H4.300V11.500L1.300 8.200Q.8 7.500 1.500 7T2.800 7.300L3.500 8" fill="#fff" stroke="#222" stroke-width=".9" stroke-linejoin="round"/></svg></div><div class="tb" style="left:765.5px;width:25.0px;border-radius:0px 0px 0px 0px"><svg width="12" height="9" viewBox="0 0 12 9"><rect x=".6" y=".6" width="10.800" height="7.800" rx=".8" fill="#fff" stroke="#222" stroke-width="1.100"/><rect x=".6" y=".6" width="10.800" height="2.200" fill="#222"/><rect x="2" y="4.200" width="8" height="2.400" fill="#8a8a8a"/></svg></div><div class="tb" style="left:789.5px;width:18.0px;border-radius:0px 3px 3px 0px"><svg width="6.4" height="4.6" viewBox="0 0 7 5"><path d="M.8 .9l2.700 2.800 2.700-2.800" fill="none" stroke="#222" stroke-width="1.500"/></svg></div><div class="tb dis" style="left:814.5px;width:22.5px;border-radius:3px 0px 0px 3px"><svg width="11" height="13" viewBox="0 0 11 13"><g><path d="M1.500 4Q2.500 1 6 1.400" fill="none" stroke="#8c8c8c" stroke-width="1.100"/><path d="M5.500 0L8 1.700L5.300 3.300z" fill="#8c8c8c"/></g><ellipse cx="6" cy="5.900" rx="3.700" ry="1.400" fill="#8c8c8c"/><path d="M2.300 7.300q3.700 1.700 7.400 0v1.500q-3.700 1.700-7.400 0zM2.300 9.800q3.700 1.700 7.400 0v1.500q-3.700 1.700-7.400 0z" fill="#8c8c8c"/></svg></div><div class="tb dis" style="left:836px;width:24px;border-radius:0px 3px 3px 0px"><svg width="11" height="13" viewBox="0 0 11 13"><g transform="translate(11,0) scale(-1,1)"><path d="M1.500 4Q2.500 1 6 1.400" fill="none" stroke="#8c8c8c" stroke-width="1.100"/><path d="M5.500 0L8 1.700L5.300 3.300z" fill="#8c8c8c"/></g><ellipse cx="6" cy="5.900" rx="3.700" ry="1.400" fill="#8c8c8c"/><path d="M2.300 7.300q3.700 1.700 7.400 0v1.500q-3.700 1.700-7.400 0zM2.300 9.800q3.700 1.700 7.400 0v1.500q-3.700 1.700-7.400 0z" fill="#8c8c8c"/></svg></div><div class="tb" style="left:866.5px;width:34.0px;border-radius:3px 3px 3px 3px"><span style="display:inline-flex;align-items:center;gap:2px"><svg width="13" height="10" viewBox="0 0 13 10"><path d="M4.800 1h7.500L8 8.500H.5z" fill="#222"/><path d="M.5 8.500L2.300 5.400h7.500L8 8.500z" fill="#fff" stroke="#222" stroke-width=".9"/></svg><svg width="6.4" height="4.6" viewBox="0 0 7 5"><path d="M.8 .9l2.700 2.800 2.700-2.800" fill="none" stroke="#222" stroke-width="1.500"/></svg></span></div><div class="tb" style="left:906.5px;width:23.5px;border-radius:3px 3px 3px 3px"><svg width="12" height="12" viewBox="0 0 12 12"><path d="M4.500 .5h3v4h2.300L6 8.300 2.200 4.500h2.300z" fill="#111"/><path d="M.8 8.300h3l2.200 1.500 2.200-1.500h3v3H.8z" fill="#111"/></svg></div>
<div id="conn"></div>
<div class="abs" style="left:282px;top:69px;width:1px;height:20px;background:#fff"></div>
<div class="abs" style="left:260.300px;top:71.700px;line-height:0"><svg width="16" height="16" viewBox="0 0 16 16"><g transform="rotate(-42 8 8)" fill="none" stroke="#fff" stroke-linecap="round"><ellipse cx="8" cy="8" rx="6.300" ry="3.500" stroke-width="1.500"/><path d="M6.300 4.800v6.400M9.700 4.800v6.400" stroke-width="1.400"/><path d="M0 8h1.700M14.300 8h1.700" stroke-width="1.500"/></g></svg></div>
<div class="abs" style="left:285.6px;letter-spacing:-0.2px;top:69px;height:20px;line-height:20px;color:#fff;font-size:10.800px;white-space:nowrap">NewEmployees/postgres@PostgreSQL 11</div>

<div class="st" style="left:261.5px;letter-spacing:-0.156px;top:90px;color:#326690">Query Editor</div>
<div class="st" style="left:333.5px;letter-spacing:-0.074px;top:90px">Query History</div>
<div class="abs" style="left:254px;top:111px;width:72.100px;height:2px;background:#1f5a8a"></div>
<div class="hl" style="left:254px;top:114px;width:685px"></div>
<div id="gut"></div>
<div class="selbg" style="left:288.700px;top:207px;width:651px;height:45px"></div>
<div class="selbg" style="left:288.700px;top:252px;width:51.500px;height:15px"></div>
<div class="ln" style="top:117.7px">85</div><div class="cl" style="top:117.7px"><b class="k">ORDER</b> <b class="k">BY</b> RANDOM<span class="b">()</span></div>
<div class="ln" style="top:132.7px">86</div><div class="cl" style="top:132.7px"><b class="k">LIMIT</b> <span class="n">5</span>;</div>
<div class="ln" style="top:147.7px">87</div><div class="cl" style="top:147.7px"></div>
<div class="ln" style="top:162.7px">88</div><div class="cl" style="top:162.7px"><span class="c">-- 3.6: Retrieve a list of five lucky customers using the RANDOM() function</span></div>
<div class="ln" style="top:177.7px">89</div><div class="cl" style="top:177.7px"><b class="k">SELECT</b> SETSEED<span class="b">(</span><span class="n">0.5</span><span class="b">)</span></div>
<div class="ln" style="top:192.7px">90</div><div class="cl" style="top:192.7px"></div>
<div class="ln" style="top:207.7px">91</div><div class="cl" style="top:207.7px"><b class="k">SELECT</b> customer_id, customer_name</div>
<div class="ln" style="top:222.7px">92</div><div class="cl" style="top:222.7px"><b class="k">FROM</b> customers</div>
<div class="ln" style="top:237.7px">93</div><div class="cl" style="top:237.7px"><b class="k">ORDER</b> <b class="k">BY</b> RANDOM<span class="b">()</span></div>
<div class="ln" style="top:252.7px">94</div><div class="cl" style="top:252.7px"><b class="k">LIMIT</b> <span class="n">5</span>;</div>
<div class="ln" style="top:267.7px">95</div><div class="cl" style="top:267.7px"></div>
<div class="ln" style="top:282.7px">96</div><div class="cl" style="top:282.7px">#############################</div>
<div class="ln" style="top:297.7px">97</div><div class="cl" style="top:297.7px"><span class="c">-- Task Four: ROUND &amp; TRUNC</span></div>
<div class="ln" style="top:312.7px">98</div><div class="cl" style="top:312.7px"><span class="c">-- In this task, we will learn how to use ROUND &amp; TRUNC functions</span></div>
<div class="ln" style="top:327.7px">99</div><div class="cl" style="top:327.7px"><span class="c">-- to return a number rounded to a certain number of decimal places</span></div>
<div class="ln" style="top:342.7px">100</div><div class="cl" style="top:342.7px">#############################</div>
<div class="hl" style="left:254px;top:355.700px;width:685px"></div>

<div class="st" style="left:261.5px;letter-spacing:-0.012px;top:357px">Messages</div>
<div class="st" style="left:325.3px;letter-spacing:-0.175px;top:357px;color:#326690">Data Output</div>
<div class="st" style="left:395.7px;letter-spacing:-0.107px;top:357px">Explain</div>
<div class="st" style="left:444.5px;letter-spacing:0.161px;top:357px">Notifications</div>
<div class="abs" style="left:317.200px;top:378px;width:70.700px;height:2px;background:#1f5a8a"></div>
<div class="hl" style="left:254px;top:380px;width:685px"></div>
<div class="abs" style="left:254px;top:411px;width:685px;height:208px;background:#ebeef3"></div>
<div class="gh" style="left:281.4px;letter-spacing:-0.532px;top:384.3px;font-weight:bold">customer_id</div>
<div class="gh" style="left:281.4px;letter-spacing:-0.209px;top:395.5px">[PK] character (8)</div>
<div class="gh" style="left:388.9px;letter-spacing:-0.493px;top:384.3px;font-weight:bold">customer_name</div>
<div class="gh" style="left:388.9px;letter-spacing:-0.161px;top:395.5px">character varying (255)</div>
<svg class="abs" style="left:265.200px;top:398.300px" width="8" height="8" viewBox="0 0 8 8"><path d="M7.500 .5V7.500H.5z" fill="#666"/></svg>
<svg class="abs" style="left:370.300px;top:392.500px" width="9" height="9" viewBox="0 0 9 9"><path d="M.5 8.500l.8-2.800L5.500 1.500l2 2L3.300 7.700zM6.100 .9l.7-.7 2 2-.7.7z" fill="#333"/></svg>
<svg class="abs" style="left:504.300px;top:392.500px" width="9" height="9" viewBox="0 0 9 9"><path d="M.5 8.500l.8-2.800L5.500 1.500l2 2L3.300 7.700zM6.100 .9l.7-.7 2 2-.7.7z" fill="#333"/></svg>
<div class="abs" style="left:254px;top:411px;width:264px;height:112px;background:#fff"></div>
<div class="gr" style="top:411px;height:18px;line-height:19.6px"><span class="g0">1</span><span class="g1" style="letter-spacing:-0.402px">DB-13555</span><span class="g2" style="letter-spacing:-0.237px">Dorothy Badders</span></div>
<div class="hl" style="left:254px;top:429px;width:265px"></div>
<div class="gr" style="top:430px;height:18px;line-height:19.6px"><span class="g0">2</span><span class="g1" style="letter-spacing:-0.233px">AM-10705</span><span class="g2" style="letter-spacing:-0.221px">Anne McFarland</span></div>
<div class="hl" style="left:254px;top:448px;width:265px"></div>
<div class="gr" style="top:449px;height:17px;line-height:18.6px"><span class="g0">3</span><span class="g1" style="letter-spacing:-0.367px">NC-18340</span><span class="g2" style="letter-spacing:-0.137px">Nat Carroll</span></div>
<div class="hl" style="left:254px;top:466px;width:265px"></div>
<div class="gr" style="top:467px;height:18px;line-height:19.6px"><span class="g0">4</span><span class="g1" style="letter-spacing:-0.298px">CL-12700</span><span class="g2" style="letter-spacing:-0.21px">Craig Leslie</span></div>
<div class="hl" style="left:254px;top:485px;width:265px"></div>
<div class="gr" style="top:486px;height:18px;line-height:19.6px"><span class="g0">5</span><span class="g1" style="letter-spacing:-0.434px">SF-20200</span><span class="g2" style="letter-spacing:-0.284px">Sarah Foster</span></div>
<div class="hl" style="left:254px;top:504px;width:265px"></div>
<div class="hl" style="left:254px;top:523px;width:265px"></div>
<div class="hl" style="left:254px;top:410px;width:685px"></div>
<div class="vl" style="left:276px;top:381px;height:142px"></div>
<div class="vl" style="left:384px;top:381px;height:142px"></div>
<div class="vl" style="left:518px;top:381px;height:142px"></div>
<div class="abs" style="left:254px;top:619px;width:685px;height:3px;background:#fff"></div>
<div class="abs" style="left:0;top:621px;width:253px;height:1px;background:#e9ebef"></div>
</body></html>
